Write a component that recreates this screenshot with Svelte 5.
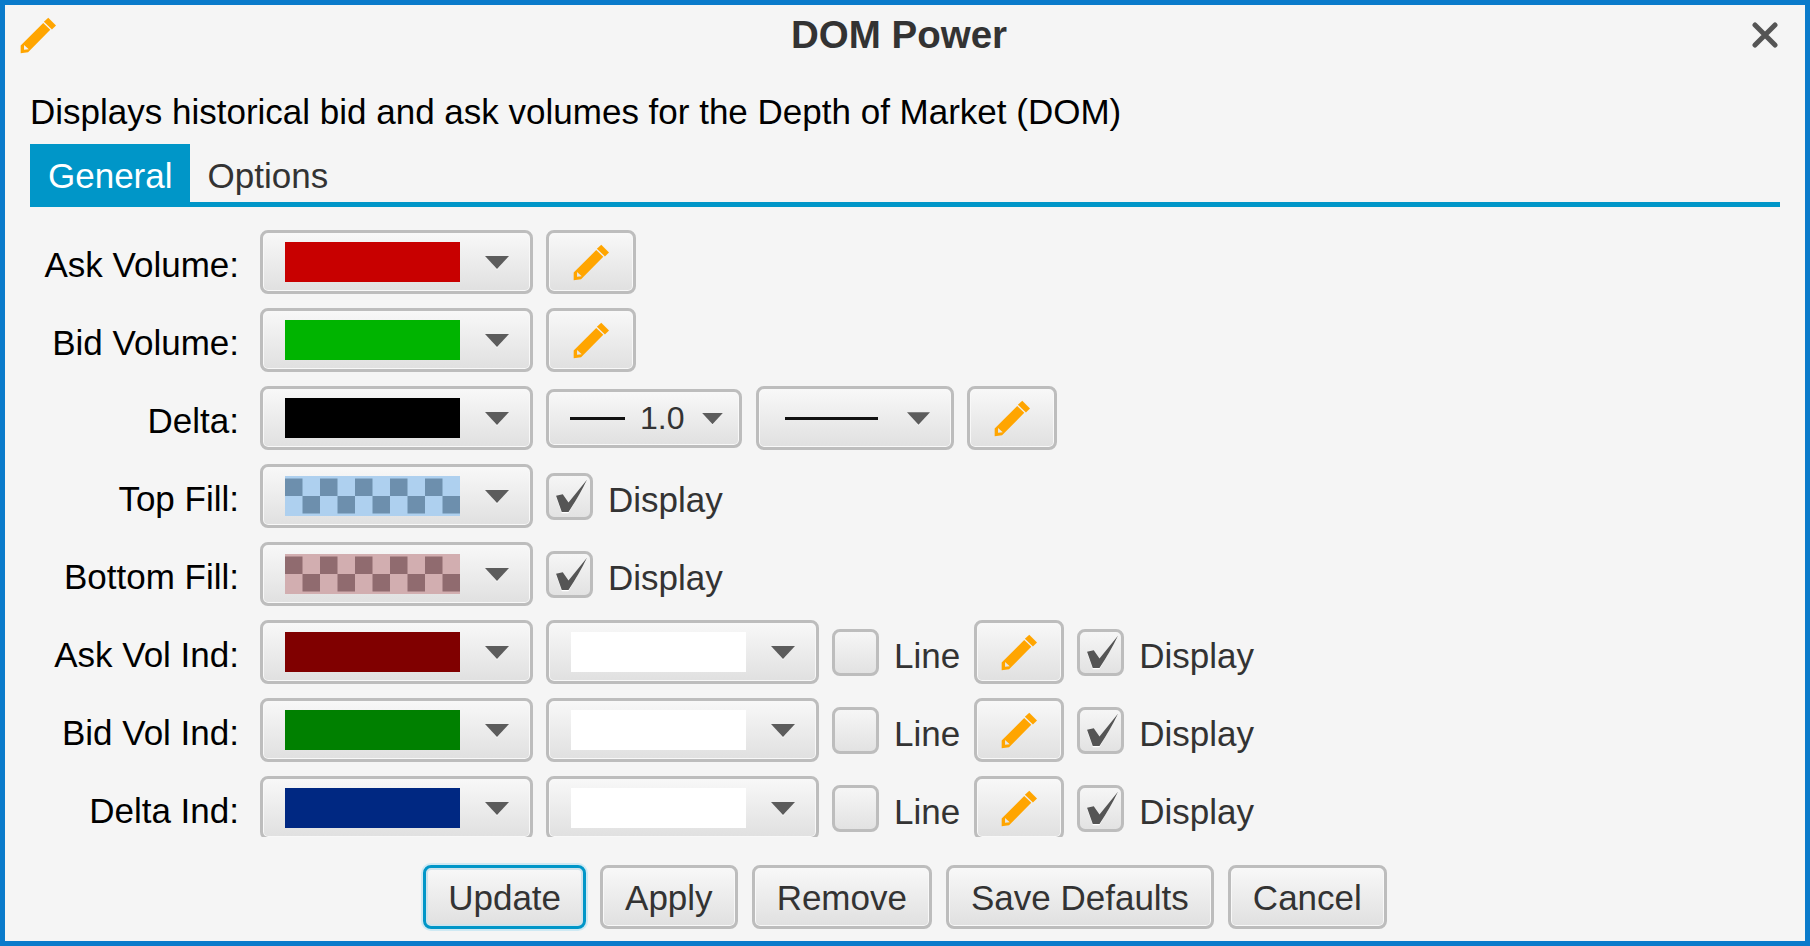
<script>
  const rows = [
    { label: 'Ask Volume:', color: '#c80000', kind: 'edit' },
    { label: 'Bid Volume:', color: '#00b400', kind: 'edit' },
    { label: 'Delta:', color: '#000000', kind: 'line' },
    { label: 'Top Fill:', fill: ['#aed0ef', '#6d8fad'], kind: 'display' },
    { label: 'Bottom Fill:', fill: ['#d2aeb0', '#906b6f'], kind: 'display' },
    { label: 'Ask Vol Ind:', color: '#800000', kind: 'ind' },
    { label: 'Bid Vol Ind:', color: '#008000', kind: 'ind' },
    { label: 'Delta Ind:', color: '#002882', kind: 'ind' }
  ];
  const buttons = ['Update', 'Apply', 'Remove', 'Save Defaults', 'Cancel'];
</script>

{#snippet pencil()}
  <svg class="pencil" viewBox="128 75 110 110">
    <path fill="#ffa500" fill-rule="evenodd" d="M130 160 197 93 218 113 152 180 130 183ZM140 158 140 172 154 171Z" />
    <path fill="#ffa500" d="M212 77 235 100 223 112 199 89Z" />
  </svg>
{/snippet}

{#snippet arrow()}
  <svg class="arrow" viewBox="0 0 24 14"><path fill="#fff" d="M5 5 12 14 19 5Z" /><path fill="#5c5c5c" d="M0 0H24L12 13Z" /></svg>
{/snippet}

{#snippet checkbox(checked)}
  <span class="check">
    {#if checked}
      <svg viewBox="9 9 122 122">
        <path fill="#fff" d="M30 71 50 66 67 91 122 23 67 120H47Z" />
        <path fill="#555" d="M30 68 50 63 67 88 122 20Q100 66 67 116H47Z" />
      </svg>
    {/if}
  </span>
{/snippet}

{#snippet swatch(row)}
  {#if row.fill}
    <svg class="swatch" viewBox="0 0 175 40">
      <rect width="175" height="40" fill={row.fill[0]} />
      {#each Array(10) as _, i}
        <rect x={i * 17.5} y={i % 2 ? 20 : 2.5} width="17.5" height="17.5" fill={row.fill[1]} />
      {/each}
    </svg>
  {:else}
    <span class="swatch" style="background: {row.color}"></span>
  {/if}
{/snippet}

<div class="window">
  <header class="titlebar">
    <span class="appicon">{@render pencil()}</span>
    <h1>DOM Power</h1>
    <svg class="close" viewBox="0 0 26 26">
      <path d="M3 3 23 23M23 3 3 23" stroke="#555" stroke-width="5" stroke-linecap="round" />
    </svg>
  </header>

  <p class="desc">Displays historical bid and ask volumes for the Depth of Market (DOM)</p>

  <div class="tabs">
    <span class="tab active">General</span>
    <span class="tab">Options</span>
  </div>

  <div class="rows">
    {#each rows as row}
      <div class="row">
        <span class="label">{row.label}</span>
        <span class="btn combo">{@render swatch(row)}{@render arrow()}</span>

        {#if row.kind === 'edit'}
          <span class="btn edit">{@render pencil()}</span>
        {:else if row.kind === 'line'}
          <span class="btn width">
            <span class="stroke short"></span>
            <span class="num">1.0</span>
            {@render arrow()}
          </span>
          <span class="btn style">
            <span class="stroke long"></span>
            {@render arrow()}
          </span>
          <span class="btn edit">{@render pencil()}</span>
        {:else if row.kind === 'display'}
          {@render checkbox(true)}
          <span class="text">Display</span>
        {:else}
          <span class="btn combo"><span class="swatch white"></span>{@render arrow()}</span>
          {@render checkbox(false)}
          <span class="text">Line</span>
          <span class="btn edit">{@render pencil()}</span>
          {@render checkbox(true)}
          <span class="text">Display</span>
        {/if}
      </div>
    {/each}
  </div>

  <footer class="actions">
    {#each buttons as label, i}
      <span class="btn action" class:focus={i === 0}>{label}</span>
    {/each}
  </footer>
</div>

<style>
  :global(body) {
    margin: 0;
    background: #f5f5f5;
  }

  .window {
    box-sizing: border-box;
    height: 946px;
    border: 5px solid #0a7bcb;
    background: #f5f5f5;
    display: flex;
    flex-direction: column;
    font-family: "Liberation Sans", Arial, sans-serif;
    font-size: 35px;
    color: #333;
  }

  .titlebar {
    height: 60px;
    padding: 0 27px 0 15px;
    display: grid;
    grid-template-columns: 1fr auto 1fr;
    align-items: center;
  }

  .appicon {
    display: flex;
  }

  h1 {
    margin: 0;
    font-size: 38.5px;
    font-weight: bold;
  }

  .close {
    width: 26px;
    height: 26px;
    justify-self: end;
  }

  .desc {
    margin: 0;
    padding: 0 25px;
    height: 79px;
    line-height: 93px;
    color: #000;
  }

  .tabs {
    box-sizing: border-box;
    margin: 0 25px;
    height: 63px;
    display: flex;
    border-bottom: 5px solid #0096c8;
  }

  .tab {
    padding: 0 18px;
    line-height: 64px;
    color: #333;
  }

  .tab.active {
    padding-right: 17px;
    background: #0096c8;
    color: #fff;
  }

  .rows {
    height: 607px;
    margin-top: 23px;
    padding-left: 25px;
    overflow: hidden;
    display: flex;
    flex-direction: column;
    gap: 14px;
  }

  .row {
    height: 64px;
    flex: none;
    display: flex;
    align-items: center;
    gap: 13px;
  }

  .label {
    width: 209px;
    margin-right: 8px;
    padding-top: 5px;
    text-align: right;
    color: #000;
  }

  .btn {
    box-sizing: border-box;
    height: 64px;
    border: 3px solid #bdbdbd;
    border-radius: 8px;
    background: linear-gradient(#f8f8f8, #e0e0e0);
    box-shadow: inset 0 0 0 1px #f8f8f8;
    display: flex;
    align-items: center;
  }

  .combo {
    width: 273px;
    padding: 0 21px 0 22px;
    justify-content: space-between;
  }

  .swatch {
    display: block;
    width: 175px;
    height: 40px;
    flex: none;
  }

  .white {
    background: #fff;
  }

  .arrow {
    width: 24px;
    height: 14px;
    margin-top: 1px;
    flex: none;
  }

  .edit {
    width: 90px;
    justify-content: center;
  }

  .pencil {
    width: 37px;
    height: 37px;
    flex: none;
  }

  .width {
    width: 196px;
    height: 59px;
    padding: 0 14px 0 21px;
    gap: 15px;
    color: #333;
  }

  .width .arrow {
    width: 21px;
    height: 12px;
    margin-left: 3px;
  }

  .num {
    font-size: 32px;
  }

  .style {
    width: 198px;
    margin-left: 1px;
    padding: 0 21px 0 26px;
    justify-content: space-between;
  }

  .style .arrow {
    width: 23px;
  }

  .stroke {
    height: 3px;
    background: #111;
    flex: none;
  }

  .short {
    width: 55px;
  }

  .long {
    width: 93px;
  }

  .check {
    box-sizing: border-box;
    width: 47px;
    height: 47px;
    flex: none;
    border: 3px solid #bdbdbd;
    border-radius: 8px;
    background: linear-gradient(#f6f6f6, #e2e2e2);
    display: flex;
  }

  .check svg {
    width: 41px;
    height: 41px;
  }

  .text {
    margin: 0 1px 0 2px;
    padding-top: 7px;
    color: #333;
  }

  .actions {
    margin-top: 28px;
    display: flex;
    justify-content: center;
    gap: 14px;
  }

  .action {
    padding: 2px 22px 0;
    color: #333;
  }

  .focus {
    border-color: #0096c8;
    box-shadow: 0 0 0 2px #cfe9f3, inset 0 0 0 2px #cfe3ec;
  }
</style>
